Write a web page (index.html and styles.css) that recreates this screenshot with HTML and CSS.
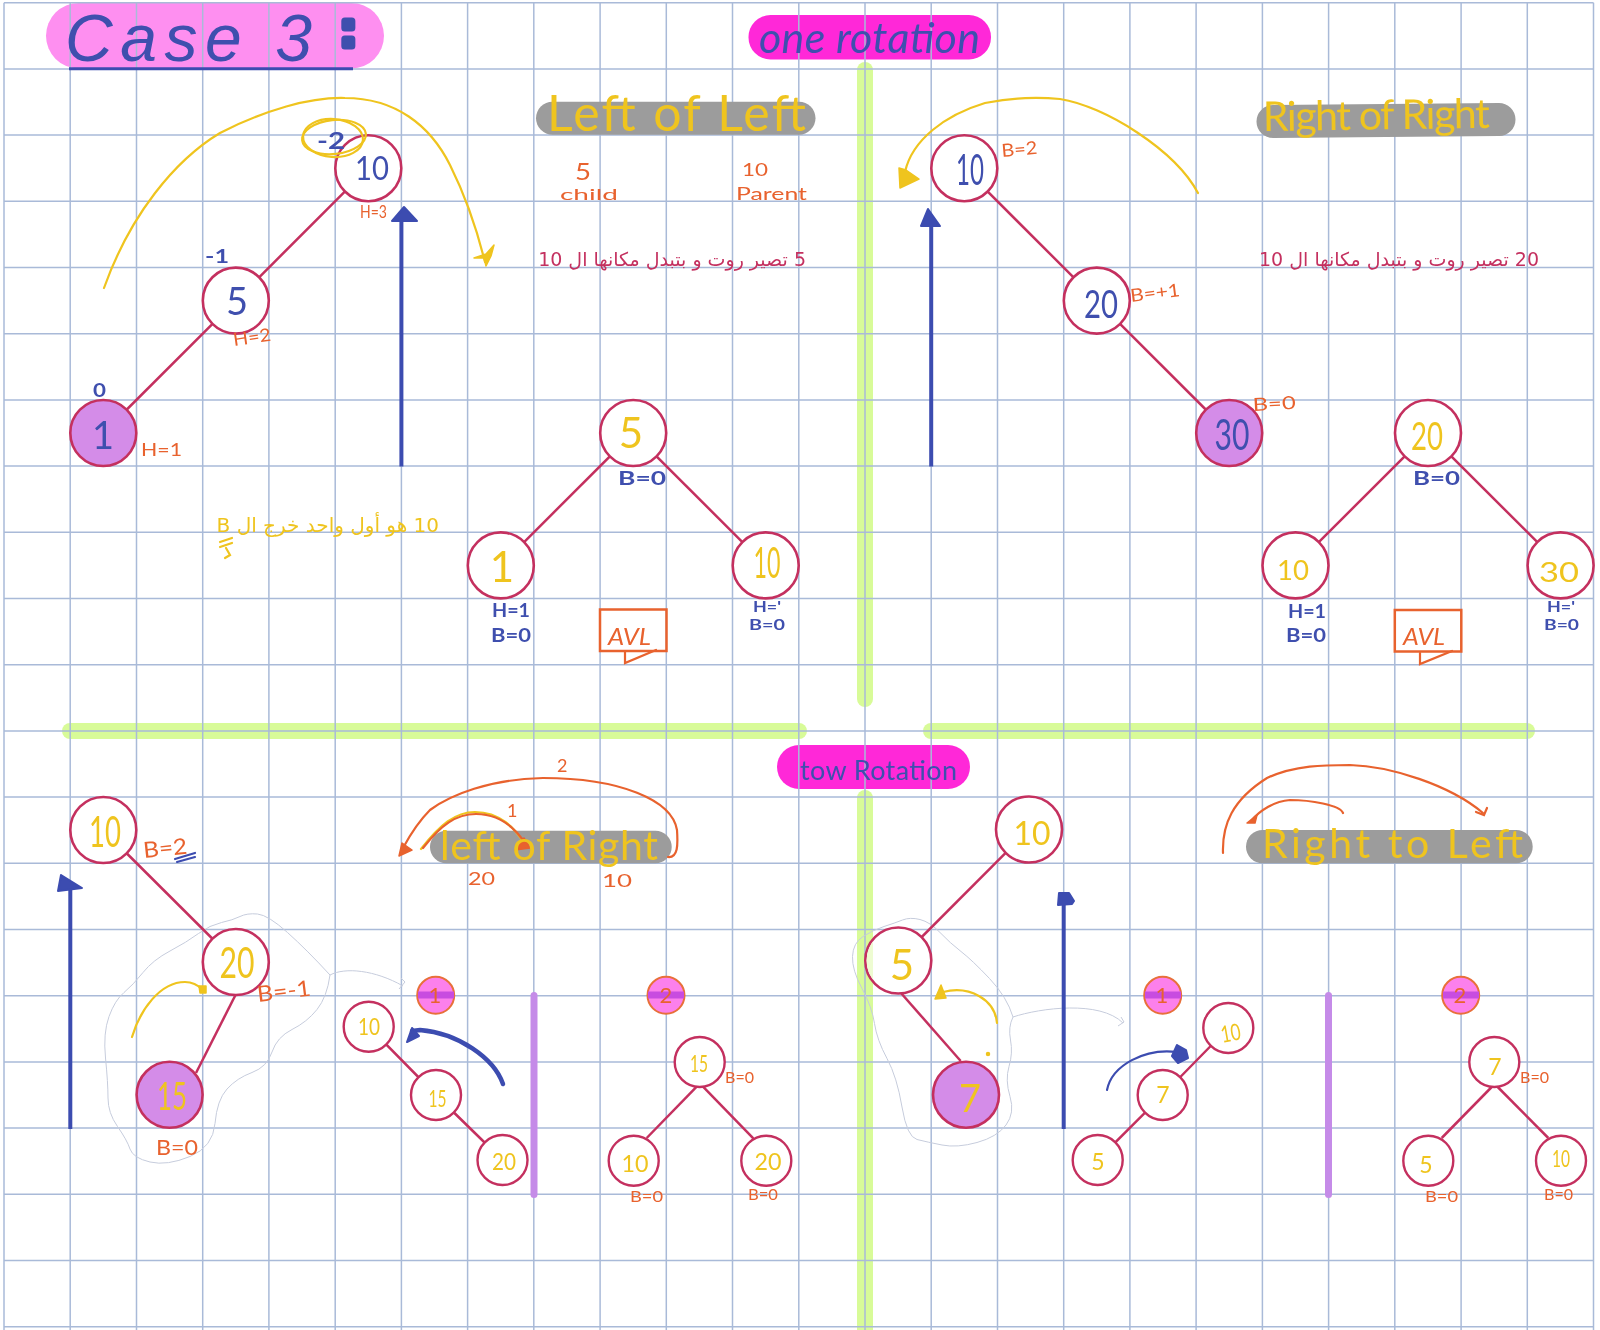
FILE: index.html
```html
<!DOCTYPE html>
<html lang="en">
<head>
<meta charset="utf-8">
<title>Case 3: AVL rotations</title>
<link rel="stylesheet" href="styles.css">
</head>
<body>
<main class="board">
<svg class="canvas" xmlns="http://www.w3.org/2000/svg" width="1600" height="1330" viewBox="0 0 1600 1330">
  <!-- highlighter strokes, under the paper grid -->
  <g class="highlights">
    <rect class="pill-case" x="46" y="3" width="338" height="65.5" rx="32.7"/>
    <rect class="pill-magenta" x="748.5" y="15" width="242.5" height="44.5" rx="22"/>
    <rect class="pill-magenta" x="777" y="745" width="193" height="44" rx="22"/>
    <rect class="band" x="857" y="62" width="16" height="645" rx="8"/>
    <rect class="band" x="857" y="790" width="16" height="560" rx="8"/>
    <rect class="band" x="62" y="723" width="745" height="16" rx="8"/>
    <rect class="band" x="923" y="723" width="612" height="16" rx="8"/>
  </g>

  <g class="grid">
    <line x1="4" y1="2.7" x2="4" y2="1330"/><line x1="70.2" y1="2.7" x2="70.2" y2="1330"/><line x1="136.5" y1="2.7" x2="136.5" y2="1330"/><line x1="202.7" y1="2.7" x2="202.7" y2="1330"/><line x1="268.9" y1="2.7" x2="268.9" y2="1330"/><line x1="335.2" y1="2.7" x2="335.2" y2="1330"/><line x1="401.4" y1="2.7" x2="401.4" y2="1330"/><line x1="467.6" y1="2.7" x2="467.6" y2="1330"/><line x1="533.8" y1="2.7" x2="533.8" y2="1330"/><line x1="600.1" y1="2.7" x2="600.1" y2="1330"/><line x1="666.3" y1="2.7" x2="666.3" y2="1330"/><line x1="732.5" y1="2.7" x2="732.5" y2="1330"/><line x1="798.8" y1="2.7" x2="798.8" y2="1330"/><line x1="865" y1="2.7" x2="865" y2="1330"/><line x1="931.2" y1="2.7" x2="931.2" y2="1330"/><line x1="997.5" y1="2.7" x2="997.5" y2="1330"/><line x1="1063.7" y1="2.7" x2="1063.7" y2="1330"/><line x1="1129.9" y1="2.7" x2="1129.9" y2="1330"/><line x1="1196.1" y1="2.7" x2="1196.1" y2="1330"/><line x1="1262.4" y1="2.7" x2="1262.4" y2="1330"/><line x1="1328.6" y1="2.7" x2="1328.6" y2="1330"/><line x1="1394.8" y1="2.7" x2="1394.8" y2="1330"/><line x1="1461.1" y1="2.7" x2="1461.1" y2="1330"/><line x1="1527.3" y1="2.7" x2="1527.3" y2="1330"/><line x1="1593.5" y1="2.7" x2="1593.5" y2="1330"/>
    <line x1="4" y1="2.7" x2="1593.5" y2="2.7"/><line x1="4" y1="68.9" x2="1593.5" y2="68.9"/><line x1="4" y1="135.1" x2="1593.5" y2="135.1"/><line x1="4" y1="201.3" x2="1593.5" y2="201.3"/><line x1="4" y1="267.5" x2="1593.5" y2="267.5"/><line x1="4" y1="333.7" x2="1593.5" y2="333.7"/><line x1="4" y1="399.9" x2="1593.5" y2="399.9"/><line x1="4" y1="466.1" x2="1593.5" y2="466.1"/><line x1="4" y1="532.3" x2="1593.5" y2="532.3"/><line x1="4" y1="598.5" x2="1593.5" y2="598.5"/><line x1="4" y1="664.7" x2="1593.5" y2="664.7"/><line x1="4" y1="730.9" x2="1593.5" y2="730.9"/><line x1="4" y1="797.1" x2="1593.5" y2="797.1"/><line x1="4" y1="863.3" x2="1593.5" y2="863.3"/><line x1="4" y1="929.5" x2="1593.5" y2="929.5"/><line x1="4" y1="995.7" x2="1593.5" y2="995.7"/><line x1="4" y1="1061.9" x2="1593.5" y2="1061.9"/><line x1="4" y1="1128.1" x2="1593.5" y2="1128.1"/><line x1="4" y1="1194.3" x2="1593.5" y2="1194.3"/><line x1="4" y1="1260.5" x2="1593.5" y2="1260.5"/><line x1="4" y1="1326.7" x2="1593.5" y2="1326.7"/>
  </g>

  <!-- grey title pills and dividers -->
  <g class="pills-grey">
    <rect x="536" y="101.7" width="279.5" height="33" rx="16.5"/>
    <path class="pill-stroke" d="M1273,121.5 L1499,119.5"/>
    <rect x="430" y="830.7" width="241.7" height="32.6" rx="16.3"/>
    <rect x="1246" y="830" width="286.7" height="33.3" rx="16.6"/>
  </g>
  <rect class="divider" x="530.5" y="992" width="7" height="206" rx="3.5"/>
  <rect class="divider" x="1325" y="992" width="7" height="206" rx="3.5"/>

  <!-- lassos -->
  <g class="lasso">
    <path d="M330,975 Q307,950 287.5,932.5 Q268,915 257.5,914 Q247,913 240,916.5 Q233,920 221.5,922.5 Q210,925 198.5,933.5 Q187,942 170,951 Q153,960 143,972.5 Q133,985 124,992.5 Q115,1000 109,1016.5 Q103,1033 105.5,1058 Q108,1083 108,1098 Q108,1113 117.5,1126.5 Q127,1140 130,1149 Q133,1158 150,1162 Q167,1166 190,1156.5 Q213,1147 215,1123.5 Q217,1100 227,1089 Q237,1078 252,1072.5 Q267,1067 272,1052 Q277,1037 292,1029.5 Q307,1022 317,1009.5 Q327,997 330,975"/>
    <path d="M330,975 C345,967 375,970 403,986 M399,989 L405,982 L401,978"/>
    <path d="M1013,1017 Q1007,997 989.5,978.5 Q972,960 961,951.5 Q950,943 940,932.5 Q930,922 920,919.5 Q910,917 902.5,920 Q895,923 884,926.5 Q873,930 863,936.5 Q853,943 852.5,956.5 Q852,970 862,988.5 Q872,1007 874.5,1023.5 Q877,1040 887,1058.5 Q897,1077 902,1107 Q907,1137 917,1139.5 Q927,1142 942,1145 Q957,1148 977,1142.5 Q997,1137 1006,1125 Q1015,1113 1010,1096.5 Q1005,1080 1009,1066.5 Q1013,1053 1010.5,1040 Q1008,1027 1013,1017"/>
    <path d="M1013,1017 C1040,1008 1100,1000 1123,1023 M1118,1026 L1124,1022 L1121,1017"/>
  </g>

  <!-- tree edges -->
  <g class="edges">
    <path d="M368.3,168.2 L235.8,300.6 L103.3,433"/>
    <path d="M500.8,565.4 L633.2,433 L765.7,565.4"/>
    <path d="M964.3,168.2 L1096.8,300.6 L1229.2,433"/>
    <path d="M1295.5,565.4 L1428,433 L1560.6,565.4"/>
    <path d="M103.3,830 L235.8,962"/>
    <path d="M236,994 L196,1073"/>
    <path d="M1029,829.5 L898.3,960.5"/>
    <path d="M901,993 L960.7,1061"/>
    <path d="M368.7,1026.7 L436,1095 L502.5,1160"/>
    <path d="M646.7,1138 L696.7,1086.7"/>
    <path d="M703,1086.7 L753.3,1138.3"/>
    <path d="M1228.3,1028 L1162.7,1095 L1097.7,1160"/>
    <path d="M1441.7,1138 L1491.7,1087"/>
    <path d="M1497.7,1087 L1548.3,1138"/>
  </g>

  <!-- tree nodes -->
  <g class="nodes">
    <circle cx="368.3" cy="168.2" r="33"/><circle cx="235.8" cy="300.6" r="33"/><circle class="hit" cx="103.3" cy="433" r="33"/>
    <circle cx="633.2" cy="433" r="33"/><circle cx="500.8" cy="565.4" r="33"/><circle cx="765.7" cy="565.4" r="33"/>
    <circle cx="964.3" cy="168.2" r="33"/><circle cx="1096.8" cy="300.6" r="33"/><circle class="hit" cx="1229.2" cy="433" r="33"/>
    <circle cx="1428" cy="433" r="33"/><circle cx="1295.5" cy="565.4" r="33"/><circle cx="1560.6" cy="565.4" r="33"/>
    <circle cx="103.3" cy="830" r="33"/><circle cx="235.8" cy="962" r="33"/><circle class="hit" cx="169.6" cy="1094.8" r="33"/>
    <circle cx="1029" cy="829.5" r="33"/><circle cx="898.3" cy="960.5" r="33"/><circle class="hit" cx="966" cy="1094.7" r="33"/>
    <circle class="small" cx="368.7" cy="1026.7" r="25"/><circle class="small" cx="436" cy="1095" r="25"/><circle class="small" cx="502.5" cy="1160" r="25"/>
    <circle class="small" cx="699.7" cy="1062" r="25"/><circle class="small" cx="633.7" cy="1160.7" r="25"/><circle class="small" cx="766.3" cy="1160.7" r="25"/>
    <circle class="small" cx="1228.3" cy="1028" r="25"/><circle class="small" cx="1162.7" cy="1095" r="25"/><circle class="small" cx="1097.7" cy="1160" r="25"/>
    <circle class="small" cx="1494.3" cy="1062" r="25"/><circle class="small" cx="1428.3" cy="1160.7" r="25"/><circle class="small" cx="1561" cy="1160.7" r="25"/>
  </g>
  <path class="tint" d="M873,941.4 A31.7,31.7 0 0 0 873,979.6 Z"/>

  <!-- step badges -->
  <g class="badges">
    <circle cx="435.7" cy="995.3" r="18.5"/><circle cx="666" cy="995.3" r="18.5"/><circle cx="1162.7" cy="995.3" r="18.5"/><circle cx="1460.7" cy="995.3" r="18.5"/>
  </g>
  <g class="badge-bands">
    <rect x="418" y="991.5" width="36" height="7"/><rect x="648" y="991.5" width="36" height="7"/><rect x="1145" y="991.5" width="36" height="7"/><rect x="1443" y="991.5" width="36" height="7"/>
  </g>

  <!-- blue rotation axes -->
  <g class="axis">
    <line x1="401.4" y1="218" x2="401.4" y2="466.5"/><line x1="931.2" y1="224" x2="931.2" y2="466.5"/><line x1="70.3" y1="888" x2="70.3" y2="1129"/><line x1="1063.7" y1="902" x2="1063.7" y2="1129"/>
  </g>
  <g class="axis-head">
    <polygon points="404,207 417,221 392,221"/>
    <polygon points="928,209 940,226 921,226"/>
    <polygon points="61,875 82,888 58,891"/>
    <polygon points="1059,893 1069,893 1074,901 1072,904 1058,905"/>
  </g>

  <!-- yellow strokes -->
  <g class="stroke-yellow">
    <path d="M104,288 C130,215 175,160 220,133 C265,110 310,97 345,98 C395,98 430,125 450,165 C465,195 477,230 485,262"/>
    <path d="M905,172 C912,140 945,115 985,103 C1015,97 1040,97 1060,99 C1105,106 1175,150 1198,193"/>
    <ellipse cx="334" cy="137" rx="32" ry="17" transform="rotate(-6 334 137)"/>
    <ellipse cx="333" cy="138" rx="30" ry="19" transform="rotate(4 333 138)"/>
    <path d="M132,1037 C140,1010 160,982 185,982 C192,982 198,985 203,990"/>
    <path d="M997,1023 C995,1000 970,985 943,992"/>
    <path d="M421,849 C440,825 455,812 475,812 C500,812 515,828 526,846"/>
    <path d="M220,542 L232,538 M220,547 L232,543 M226,548 L230,555 L225,558"/>
  </g>
  <g class="fill-yellow">
    <polygon points="474,258 486,254 494,245 491,256 486,266 484,258"/>
    <polygon points="899,168 906,170 919,179 900,188"/>
    <polygon points="199,986 206,986 206,993 200,993"/>
    <polygon points="941,985 946,998 935,999"/>
    <circle cx="988" cy="1054" r="1.5"/>
  </g>

  <!-- orange strokes -->
  <g class="stroke-orange">
    <path d="M668,857 C678,858 678,845 677,830 C672,800 620,778 543,778 C490,779 450,795 430,810 C418,822 410,835 403,848"/>
    <path d="M423,848 C441,825 456,814 476,814 C501,814 517,830 527,846"/>
    <path d="M1223,853 C1222,825 1232,800 1267,778 C1295,765 1325,765 1350,765 C1390,766 1450,785 1483,813"/>
    <path d="M1343,813 C1340,805 1310,800 1290,800 C1275,801 1260,810 1251,821"/>
    <path d="M1476,812 L1484,815 L1487,808"/>
    <rect class="avl" x="600" y="609.5" width="66.5" height="41.5"/>
    <path d="M625,652 L625,663 L656,650"/>
    <rect class="avl" x="1394.8" y="610" width="66.5" height="41.5"/>
    <path d="M1420,653 L1420,664 L1452,651"/>
  </g>
  <g class="fill-orange">
    <polygon points="399,856 402,843 412,850"/>
    <polygon points="530,848 515,850 524,838"/>
    <polygon points="1247,823 1257,815 1255,823"/>
  </g>

  <!-- blue strokes -->
  <g class="stroke-blue">
    <path class="heavy" d="M503,1084 C494,1058 458,1033 420,1030 L412,1031"/>
    <path d="M1107,1090 C1112,1065 1145,1048 1177,1052"/>
    <path d="M175,859 L195,853 M177,862 L195,857"/>
    <path class="under" d="M69,68.7 L353,68.7"/>
  </g>
  <g class="fill-blue">
    <polygon points="407,1042 412,1028 419,1036"/>
    <polygon points="1177,1045 1186,1050 1188,1058 1178,1063 1172,1056"/>
  </g>

  <!-- headings -->
  <text class="h-case blue" x="65" y="61" textLength="247">Case 3</text>
  <text class="h-colon blue" x="340" y="46">:</text>
  <text class="h-rot blue" x="759" y="53" textLength="221">one rotation</text>
  <text class="h-tow blue" x="800" y="780" textLength="157">tow Rotation</text>
  <text class="h-title tall yellow" x="547" y="131" textLength="259">Left of Left</text>
  <text class="h-title yellow" x="1263" y="131" textLength="227" transform="rotate(-0.8 1263 131)">Right of Right</text>
  <text class="h-title yellow" x="440" y="860" textLength="218">left of Right</text>
  <text class="h-title yellow" x="1262" y="858" textLength="261">Right to Left</text>

  <!-- node values -->
  <g class="val blue">
    <text class="md" x="372" y="180" textLength="34" lengthAdjust="spacingAndGlyphs">10</text>
    <text x="237" y="315">5</text>
    <text x="103" y="449">1</text>
    <text class="lg" x="970" y="185" textLength="28" lengthAdjust="spacingAndGlyphs">10</text>
    <text x="1101" y="318" textLength="34" lengthAdjust="spacingAndGlyphs">20</text>
    <text class="lg" x="1232" y="450" textLength="35" lengthAdjust="spacingAndGlyphs">30</text>
  </g>
  <g class="val yellow">
    <text class="lg" x="631" y="448">5</text>
    <text class="lg" x="502" y="582">1</text>
    <text class="lg" x="767" y="578" textLength="27" lengthAdjust="spacingAndGlyphs">10</text>
    <text x="1427" y="450" textLength="32" lengthAdjust="spacingAndGlyphs">20</text>
    <text class="xs" x="1293" y="580" textLength="32" lengthAdjust="spacingAndGlyphs">10</text>
    <text class="xs" x="1559" y="582" textLength="40" lengthAdjust="spacingAndGlyphs">30</text>
    <text class="lg" x="105" y="847" textLength="32" lengthAdjust="spacingAndGlyphs">10</text>
    <text class="lg" x="237" y="978" textLength="35" lengthAdjust="spacingAndGlyphs">20</text>
    <text x="172" y="1110" textLength="30" lengthAdjust="spacingAndGlyphs">15</text>
    <text class="md" x="1032" y="845" textLength="37" lengthAdjust="spacingAndGlyphs">10</text>
    <text class="lg" x="902" y="980">5</text>
    <text x="970" y="1112">7</text>
  </g>
  <g class="val-small yellow">
    <text x="369" y="1035" textLength="22" lengthAdjust="spacingAndGlyphs">10</text>
    <text x="437.5" y="1107" textLength="18" lengthAdjust="spacingAndGlyphs">15</text>
    <text x="504" y="1170" textLength="24" lengthAdjust="spacingAndGlyphs">20</text>
    <text x="699" y="1072" textLength="18" lengthAdjust="spacingAndGlyphs">15</text>
    <text x="635" y="1172" textLength="27" lengthAdjust="spacingAndGlyphs">10</text>
    <text x="768" y="1170" textLength="27" lengthAdjust="spacingAndGlyphs">20</text>
    <text x="1098" y="1170">5</text>
    <text x="1163" y="1103">7</text>
    <text x="1232" y="1041" textLength="20" lengthAdjust="spacingAndGlyphs" transform="rotate(-10 1232 1041)">10</text>
    <text x="1495" y="1075">7</text>
    <text x="1426" y="1173">5</text>
    <text x="1561" y="1167" textLength="18" lengthAdjust="spacingAndGlyphs">10</text>
  </g>

  <!-- annotations -->
  <g class="note orange">
    <text class="mid" x="360" y="218" textLength="27" lengthAdjust="spacingAndGlyphs">H=3</text>
    <text class="mid" x="234" y="346" textLength="38" lengthAdjust="spacingAndGlyphs" transform="rotate(-8 234 346)">H=2</text>
    <text class="mid" x="141" y="456" textLength="41" lengthAdjust="spacingAndGlyphs">H=1</text>
    <text class="mid" x="1002" y="157" textLength="36" lengthAdjust="spacingAndGlyphs" transform="rotate(-5 1002 157)">B=2</text>
    <text class="mid" x="1131" y="302" textLength="50" lengthAdjust="spacingAndGlyphs" transform="rotate(-7 1131 302)">B=+1</text>
    <text class="mid" x="1253" y="411" textLength="43" lengthAdjust="spacingAndGlyphs" transform="rotate(-3 1253 411)">B=0</text>
    <text class="big" x="144" y="858" textLength="44" lengthAdjust="spacingAndGlyphs" transform="rotate(-6 144 858)">B=2</text>
    <text class="big" x="258" y="1002" textLength="54" lengthAdjust="spacingAndGlyphs" transform="rotate(-7 258 1002)">B=-1</text>
    <text class="big" x="156" y="1155" textLength="42" lengthAdjust="spacingAndGlyphs">B=0</text>
    <text x="725" y="1083" textLength="29" lengthAdjust="spacingAndGlyphs">B=0</text>
    <text x="630" y="1202" textLength="33" lengthAdjust="spacingAndGlyphs">B=0</text>
    <text x="748" y="1200" textLength="30" lengthAdjust="spacingAndGlyphs">B=0</text>
    <text x="1520" y="1083" textLength="29" lengthAdjust="spacingAndGlyphs">B=0</text>
    <text x="1425" y="1202" textLength="33" lengthAdjust="spacingAndGlyphs">B=0</text>
    <text x="1544" y="1200" textLength="29" lengthAdjust="spacingAndGlyphs">B=0</text>
    <text class="mid" x="468" y="885" textLength="27" lengthAdjust="spacingAndGlyphs">20</text>
    <text class="mid" x="602" y="887" textLength="30" lengthAdjust="spacingAndGlyphs">10</text>
    <text class="mid" x="557" y="772">2</text>
    <text class="mid" x="507" y="817">1</text>
    <text class="five" x="575" y="180" textLength="16" lengthAdjust="spacingAndGlyphs">5</text>
    <text class="mid" x="742" y="176" textLength="26" lengthAdjust="spacingAndGlyphs">10</text>
    <text x="560" y="200" textLength="58" lengthAdjust="spacingAndGlyphs">child</text>
    <text class="mid" x="736" y="200" textLength="71" lengthAdjust="spacingAndGlyphs">Parent</text>
    <text class="avl-label" x="608" y="645" textLength="43" lengthAdjust="spacingAndGlyphs">AVL</text>
    <text class="avl-label" x="1403" y="645" textLength="42" lengthAdjust="spacingAndGlyphs">AVL</text>
    <text class="digit-badge" x="435" y="1003">1</text>
    <text class="digit-badge" x="666" y="1003">2</text>
    <text class="digit-badge" x="1162" y="1003">1</text>
    <text class="digit-badge" x="1460" y="1003">2</text>
  </g>
  <g class="note blue strong">
    <text class="big" x="317" y="149" textLength="28" lengthAdjust="spacingAndGlyphs">-2</text>
    <text class="mid" x="205" y="263" textLength="24" lengthAdjust="spacingAndGlyphs">-1</text>
    <text class="mid" x="93" y="397" textLength="13" lengthAdjust="spacingAndGlyphs">0</text>
    <text class="mid" x="618" y="485" textLength="48" lengthAdjust="spacingAndGlyphs">B=0</text>
    <text class="mid" x="1413" y="485" textLength="47" lengthAdjust="spacingAndGlyphs">B=0</text>
    <text class="mid" x="492" y="617" textLength="38" lengthAdjust="spacingAndGlyphs">H=1</text>
    <text class="mid" x="491" y="642" textLength="40" lengthAdjust="spacingAndGlyphs">B=0</text>
    <text x="753" y="612" textLength="28" lengthAdjust="spacingAndGlyphs">H='</text>
    <text x="749" y="630" textLength="36" lengthAdjust="spacingAndGlyphs">B=0</text>
    <text class="mid" x="1288" y="618" textLength="38" lengthAdjust="spacingAndGlyphs">H=1</text>
    <text class="mid" x="1286" y="642" textLength="40" lengthAdjust="spacingAndGlyphs">B=0</text>
    <text x="1547" y="612" textLength="28" lengthAdjust="spacingAndGlyphs">H='</text>
    <text x="1544" y="630" textLength="35" lengthAdjust="spacingAndGlyphs">B=0</text>
  </g>

  <!-- Arabic notes -->
  <text class="ar ar-top crimson" x="806" y="266">5 تصير روت و بتبدل مكانها ال 10</text>
  <text class="ar ar-top crimson" x="1539" y="266">20 تصير روت و بتبدل مكانها ال 10</text>
  <text class="ar ar-low yellow" x="439" y="532">10 هو أول واحد خرج ال B</text>
</svg>
</main>
</body>
</html>
```
FILE: styles.css
```css
html, body { margin: 0; padding: 0; background: #fff; }
.board { width: 1600px; height: 1330px; overflow: hidden; }
.canvas { display: block; filter: blur(0.35px); }

.grid line { stroke: #a9bad8; stroke-width: 1.5; }

.pill-case { fill: #fe8ff0; }
.pill-magenta { fill: #ff28d8; }
.band { fill: #d8fb98; }

.pills-grey rect { fill: #9c9c9c; }
.pill-stroke { fill: none; stroke: #9c9c9c; stroke-width: 33; stroke-linecap: round; }
.divider { fill: #c58be8; }

.lasso path { fill: none; stroke: #c6ccdc; stroke-width: 1; }

.edges path { fill: none; stroke: #c4305f; stroke-width: 2.5; }

.nodes circle { fill: #fff; stroke: #c4305f; stroke-width: 2.6; }
.nodes circle.hit { fill: #d48ce8; }
.nodes circle.small { stroke-width: 2.4; }
.tint { fill: #eefcd2; }

.badges circle { fill: #fc80ec; stroke: #e8703a; stroke-width: 2; }
.badge-bands rect { fill: #c84ce0; }

.axis line { stroke: #3c4cb0; stroke-width: 4; }
.axis-head polygon { fill: #3c4cb0; stroke: #3c4cb0; stroke-width: 2; stroke-linejoin: round; }

.stroke-yellow path, .stroke-yellow ellipse { fill: none; stroke: #efc41e; stroke-width: 2.2; stroke-linecap: round; }
.fill-yellow polygon, .fill-yellow circle { fill: #efc41e; stroke: #efc41e; stroke-width: 1.5; stroke-linejoin: round; }

.stroke-orange path, .stroke-orange rect { fill: none; stroke: #e8622e; stroke-width: 2.2; stroke-linecap: round; }
.stroke-orange .avl { stroke-width: 2.5; }
.fill-orange polygon { fill: #e8622e; stroke: #e8622e; stroke-width: 1.5; stroke-linejoin: round; }

.stroke-blue path { fill: none; stroke: #3c4cb0; stroke-width: 2.2; stroke-linecap: round; }
.stroke-blue .heavy { stroke-width: 4.5; }
.stroke-blue .under { stroke-width: 3; stroke-linecap: butt; }
.fill-blue polygon { fill: #3c4cb0; stroke: #3c4cb0; stroke-width: 2; stroke-linejoin: round; }

text { font-family: "Lato", "Noto Sans", sans-serif; }
.blue { fill: #3f4fae; }
.yellow { fill: #efc41e; }
.orange { fill: #e8622e; }
.crimson { fill: #c4305f; }

.h-case { font-family: "Liberation Sans", sans-serif; font-size: 66px; font-style: italic; font-weight: 400; }
.h-colon { font-family: "Liberation Sans", sans-serif; font-size: 50px; font-weight: 700; stroke: #3f4fae; stroke-width: 7; stroke-linejoin: round; }
.h-rot { font-size: 43px; font-style: italic; font-weight: 400; }
.h-tow { font-size: 27px; font-weight: 400; }
.h-title { font-size: 41px; font-weight: 400; }
.h-title.tall { font-size: 50px; }

.val text { font-size: 38px; font-weight: 400; text-anchor: middle; }
.val text.lg { font-size: 42px; }
.val text.md { font-size: 33px; }
.val text.xs { font-size: 26px; }
.val-small text { font-size: 23px; font-weight: 400; text-anchor: middle; }

.note text { font-size: 16px; font-weight: 400; }
.note text.mid { font-size: 18px; }
.note text.big { font-size: 22px; }
.note text.five { font-size: 24px; }
.note.strong text { font-weight: 700; }
.note text.avl-label { font-size: 24px; font-style: italic; }
.note text.digit-badge { font-size: 22px; text-anchor: middle; }

.ar { font-family: "DejaVu Sans", "Noto Sans", sans-serif; direction: rtl; unicode-bidi: plaintext; }
.ar-top { font-size: 19px; }
.ar-low { font-size: 20px; }
```
